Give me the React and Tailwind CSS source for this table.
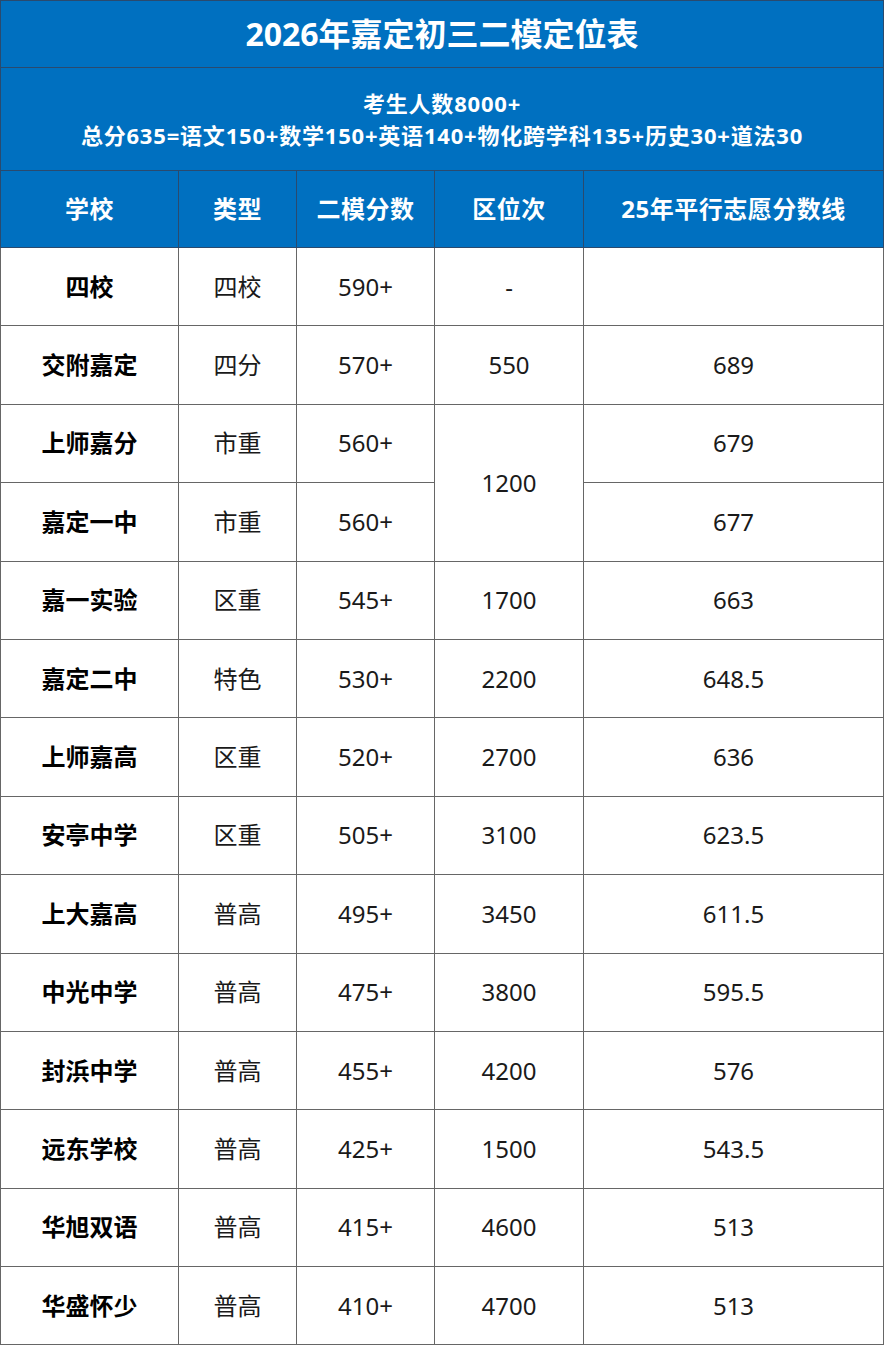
import React from "react";

const rows = [
  ["四校", "四校", "590+", "-", ""],
  ["交附嘉定", "四分", "570+", "550", "689"],
  ["上师嘉分", "市重", "560+", "1200", "679"],
  ["嘉定一中", "市重", "560+", null, "677"],
  ["嘉一实验", "区重", "545+", "1700", "663"],
  ["嘉定二中", "特色", "530+", "2200", "648.5"],
  ["上师嘉高", "区重", "520+", "2700", "636"],
  ["安亭中学", "区重", "505+", "3100", "623.5"],
  ["上大嘉高", "普高", "495+", "3450", "611.5"],
  ["中光中学", "普高", "475+", "3800", "595.5"],
  ["封浜中学", "普高", "455+", "4200", "576"],
  ["远东学校", "普高", "425+", "1500", "543.5"],
  ["华旭双语", "普高", "415+", "4600", "513"],
  ["华盛怀少", "普高", "410+", "4700", "513"],
];

const font = { fontFamily: '"Noto Sans", "Noto Sans CJK SC", sans-serif' };

export default function App() {
  return (
    <div className="w-[884px] h-[1346px] bg-white overflow-hidden" style={font}>
      <table className="w-[883px] border-collapse table-fixed">
        <colgroup>
          <col className="w-[178px]" />
          <col className="w-[118px]" />
          <col className="w-[138px]" />
          <col className="w-[149px]" />
          <col className="w-[300px]" />
        </colgroup>
        <thead>
          <tr className="h-[67px] bg-[#0070c0]">
            <th colSpan={5} className="border border-[#2a4a6e] text-white text-[32px] font-bold leading-none text-center">
              2026年嘉定初三二模定位表
            </th>
          </tr>
          <tr className="h-[103px] bg-[#0070c0]">
            <th colSpan={5} className="border border-[#2a4a6e] text-white text-[22px] tracking-[0.8px] font-bold leading-[32px] text-center">
              考生人数8000+
              <br />
              总分635=语文150+数学150+英语140+物化跨学科135+历史30+道法30
            </th>
          </tr>
          <tr className="h-[77px] bg-[#0070c0]">
            {["学校", "类型", "二模分数", "区位次", "25年平行志愿分数线"].map((h) => (
              <th key={h} className="border border-[#2a4a6e] text-white text-[24px] tracking-[0.5px] font-bold text-center">
                {h}
              </th>
            ))}
          </tr>
        </thead>
        <tbody>
          {rows.map((r, i) => (
            <tr key={i} className="h-[78.4px]">
              <td className="border border-[#666] text-center text-[24px] font-bold text-black">{r[0]}</td>
              <td className="border border-[#666] text-center text-[24px] text-[#1a1a1a]">{r[1]}</td>
              <td className="border border-[#666] text-center text-[24px] text-[#1a1a1a]">{r[2]}</td>
              {r[3] !== null && (
                <td rowSpan={i === 2 ? 2 : 1} className="border border-[#666] text-center text-[24px] text-[#1a1a1a]">
                  {r[3]}
                </td>
              )}
              <td className="border border-[#666] text-center text-[24px] text-[#1a1a1a]">{r[4]}</td>
            </tr>
          ))}
        </tbody>
      </table>
    </div>
  );
}
